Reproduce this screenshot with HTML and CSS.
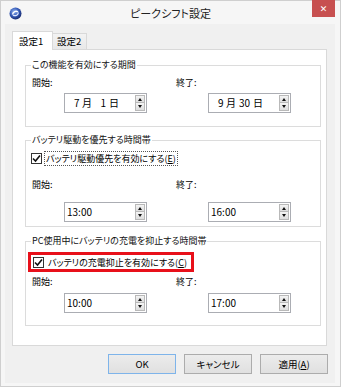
FILE: index.html
```html
<!DOCTYPE html>
<html lang="ja">
<head>
  <meta charset="UTF-8" />
  <title>ピークシフト設定</title>
  <link rel="stylesheet" href="styles.css">
</head>
<body>
  <div class="window">
    <div class="titlebar">
      <svg class="app-icon" width="13" height="13" viewBox="0 0 13 13">
        <defs>
          <radialGradient id="g" cx="40%" cy="35%" r="65%">
            <stop offset="0" stop-color="#8fb0ee"/>
            <stop offset="0.6" stop-color="#3257b5"/>
            <stop offset="1" stop-color="#1b2f73"/>
          </radialGradient>
        </defs>
        <circle cx="6.5" cy="6.5" r="6" fill="url(#g)"/>
        <path d="M3.5 7.5 C4 4.5 7 3.5 9 5" stroke="#fff" stroke-width="1.4" fill="none"/>
        <path d="M9.5 5.5 C9 8.5 6 9.5 4 8" stroke="#dfe8ff" stroke-width="1.2" fill="none"/>
      </svg>
      <div class="title">ピークシフト設定</div>
      <div class="close">✕</div>
    </div>

    <div class="client">
      <div class="tabs">
        <div class="tab active">設定1</div>
        <div class="tab">設定2</div>
      </div>

      <div class="panel">
        <fieldset class="group g1">
          <legend>この機能を有効にする期間</legend>
          <div class="cols labels">
            <div class="col">開始:</div>
            <div class="col">終了:</div>
          </div>
          <div class="cols">
            <div class="col">
              <div class="spinbox">
                <div class="value date"><span class="m">7</span>月<span class="d">1</span>日</div>
                <div class="spin"><span class="up"></span><span class="down"></span></div>
              </div>
            </div>
            <div class="col">
              <div class="spinbox">
                <div class="value date"><span class="m">9</span>月<span class="d">30</span>日</div>
                <div class="spin"><span class="up"></span><span class="down"></span></div>
              </div>
            </div>
          </div>
        </fieldset>

        <fieldset class="group g2">
          <legend>バッテリ駆動を優先する時間帯</legend>
          <div class="check-row">
            <span class="checkbox"><svg width="9" height="9" viewBox="0 0 9 9"><path d="M1 4.5 L3.5 7 L8 1.5" stroke="#111" stroke-width="1.6" fill="none"/></svg></span>
            <span class="check-label focus">バッテリ駆動優先を有効にする(<u>E</u>)</span>
          </div>
          <div class="cols labels">
            <div class="col">開始:</div>
            <div class="col">終了:</div>
          </div>
          <div class="cols">
            <div class="col">
              <div class="spinbox">
                <div class="value time">13:00</div>
                <div class="spin"><span class="up"></span><span class="down"></span></div>
              </div>
            </div>
            <div class="col">
              <div class="spinbox">
                <div class="value time">16:00</div>
                <div class="spin"><span class="up"></span><span class="down"></span></div>
              </div>
            </div>
          </div>
        </fieldset>

        <fieldset class="group g3">
          <legend>PC使用中にバッテリの充電を抑止する時間帯</legend>
          <div class="check-row highlight">
            <span class="checkbox"><svg width="9" height="9" viewBox="0 0 9 9"><path d="M1 4.5 L3.5 7 L8 1.5" stroke="#111" stroke-width="1.6" fill="none"/></svg></span>
            <span class="check-label">バッテリの充電抑止を有効にする(<u>C</u>)</span>
          </div>
          <div class="cols labels">
            <div class="col">開始:</div>
            <div class="col">終了:</div>
          </div>
          <div class="cols">
            <div class="col">
              <div class="spinbox">
                <div class="value time">10:00</div>
                <div class="spin"><span class="up"></span><span class="down"></span></div>
              </div>
            </div>
            <div class="col">
              <div class="spinbox">
                <div class="value time">17:00</div>
                <div class="spin"><span class="up"></span><span class="down"></span></div>
              </div>
            </div>
          </div>
        </fieldset>
      </div>

      <div class="buttons">
        <div class="btn default">OK</div>
        <div class="btn">キャンセル</div>
        <div class="btn">適用(<u>A</u>)</div>
      </div>
    </div>
  </div>
</body>
</html>
```

FILE: styles.css
```css
body {
  margin: 0;
  font-family: "Noto Sans CJK JP", "Noto Sans", sans-serif;
  font-size: 9px;
  font-feature-settings: "palt";
  color: #000;
  background: #fff;
}
.window {
  width: 341px;
  height: 387px;
  box-sizing: border-box;
  border: 1px solid #cfcfcf;
  background: #f6f6f6;
}
.titlebar {
  height: 23px;
  display: grid;
  grid-template-columns: 1fr auto 1fr;
  align-items: center;
}
.app-icon {
  margin-left: 8px;
  margin-top: 1px;
}
.title {
  font-size: 11px;
  line-height: 14px;
  color: #222;
  margin-top: 1px;
}
.close {
  justify-self: end;
  align-self: start;
  width: 23px;
  height: 17px;
  margin-top: -1px;
  margin-right: 5px;
  background: #c75050;
  color: #fff;
  font-family: "DejaVu Sans", sans-serif;
  font-size: 9px;
  font-weight: bold;
  display: flex;
  align-items: center;
  justify-content: center;
}
.client {
  margin-left: 4px;
  width: 330px;
  height: 359px;
  box-sizing: border-box;
  background: #f0f0f0;
  padding: 7px 8px 0 7px;
}
.tabs {
  display: flex;
  align-items: flex-end;
  height: 18px;
}
.tab {
  height: 16px;
  box-sizing: border-box;
  border: 1px solid #d9d9d9;
  border-bottom: none;
  background: linear-gradient(#f3f3f3, #e8e8e8);
  padding: 0 5px 0 4px;
  line-height: 15px;
  margin-left: -1px;
  font-size: 9.5px;
}
.tab.active {
  position: relative;
  width: 41px;
  height: 19px;
  margin: 0 0 -1px 0;
  background: #fff;
  padding: 0 0 0 6px;
  line-height: 18px;
  z-index: 1;
}
.panel {
  width: 315px;
  height: 297px;
  box-sizing: border-box;
  border: 1px solid #d9d9d9;
  background: #fff;
  padding: 9px 9px 0 12px;
}
.group {
  margin: 0;
  border: 1px solid #dcdcdc;
  padding: 0 0 13px 6px;
  width: 293px;
  box-sizing: border-box;
}
.group legend {
  padding: 0 1px;
  margin-left: -1px;
  line-height: 12px;
  color: #111;
}
.g2 {
  margin-top: 7px;
  padding-bottom: 4px;
}
.g3 {
  margin-top: 8px;
  padding-bottom: 12px;
}
.cols {
  display: flex;
}
.col {
  width: 144px;
}
.labels {
  line-height: 12px;
  margin-top: 6px;
  margin-bottom: 4px;
}
.g2 .labels {
  margin-top: 13px;
  margin-bottom: 11px;
}
.g3 .labels {
  margin-top: 4px;
  margin-bottom: 5px;
}
.spinbox {
  margin-left: 32px;
  width: 83px;
  height: 20px;
  box-sizing: border-box;
  border: 1px solid #abadb3;
  background: #fff;
  display: flex;
  align-items: center;
}
.value {
  flex: 1;
  line-height: 18px;
  font-size: 10px;
}
.value.time {
  padding-left: 2px;
}
.value.date {
  padding-left: 9px;
}
.value.date .m {
  display: inline-block;
  width: 8px;
}
.value.date .d {
  display: inline-block;
  width: 14px;
  margin-right: 3px;
  text-align: right;
}
.spin {
  width: 10px;
  margin-right: 1px;
  display: flex;
  flex-direction: column;
}
.spin span {
  height: 8px;
  box-sizing: border-box;
  border: 1px solid #b9b9b9;
  background: linear-gradient(#f4f4f4, #dedede);
  display: flex;
  align-items: center;
  justify-content: center;
}
.spin .down {
  border-top: none;
}
.spin .up::after,
.spin .down::after {
  content: "";
  border-left: 2.5px solid transparent;
  border-right: 2.5px solid transparent;
}
.spin .up::after {
  border-bottom: 3px solid #111;
}
.spin .down::after {
  border-top: 3px solid #111;
}
.check-row {
  display: flex;
  align-items: center;
  height: 16px;
  margin-top: 4px;
  margin-left: -1px;
  white-space: nowrap;
}
.checkbox {
  width: 11px;
  height: 11px;
  flex: none;
  box-sizing: border-box;
  border: 1px solid #333;
  background: #fff;
  display: flex;
  align-items: center;
  justify-content: center;
}
.check-label {
  margin-left: 2px;
  padding: 0 1px;
  line-height: 13px;
  border: 1px solid transparent;
}
.check-label.focus {
  border: 1px dotted #555;
}
.highlight {
  width: fit-content;
  height: 20px;
  box-sizing: border-box;
  border: 3px solid #e8101a;
  margin-left: -4px;
  margin-top: 5px;
  padding: 0 2px 0 2px;
}
.buttons {
  display: flex;
  justify-content: flex-end;
  gap: 8px;
  margin-top: 8px;
  margin-right: -1px;
}
.btn {
  width: 68px;
  height: 20px;
  box-sizing: border-box;
  border: 1px solid #acacac;
  background: linear-gradient(#ececec, #e0e0e0);
  text-align: center;
  line-height: 18px;
  font-size: 9.5px;
}
.btn.default {
  border-color: #7eb4ea;
}
```
